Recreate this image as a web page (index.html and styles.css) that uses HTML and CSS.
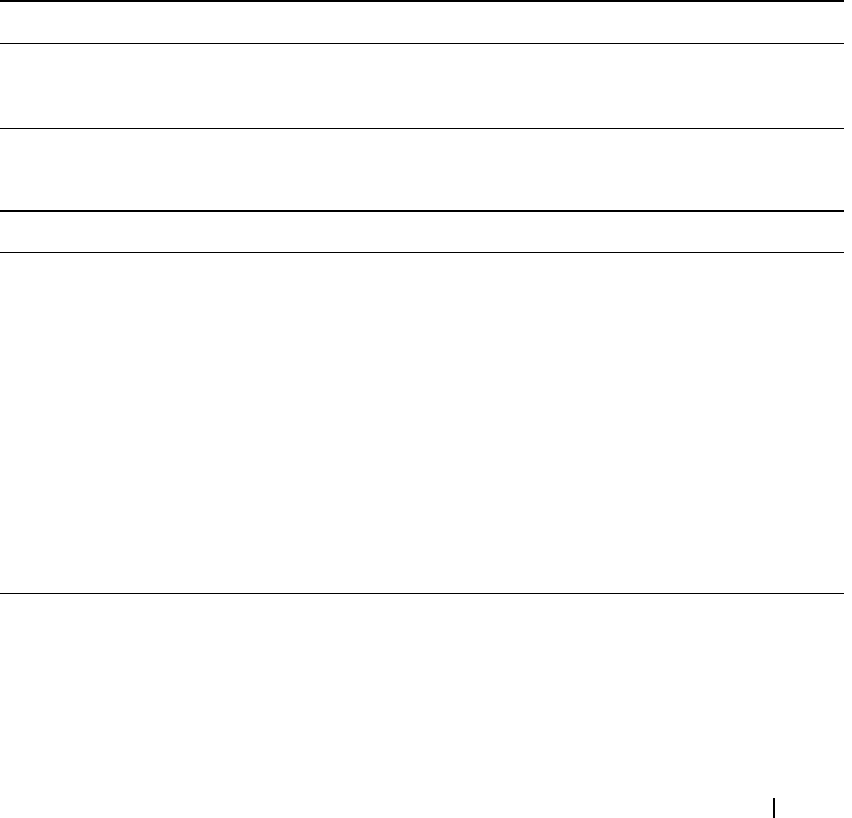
FILE: index.html
```html
<!DOCTYPE html>
<html lang="en">
<head>
    <meta charset="UTF-8">
    <title>Page</title>
    <meta name="viewport" content="width=device-width, initial-scale=1.0">
    <link rel="stylesheet" href="styles.css">
</head>
<body>
    <div class="page">
        <!-- first table -->
        <div class="table">
            <div class="row row-head"></div>
            <div class="row row-tall"></div>
            <div class="row row-last"></div>
        </div>
        <!-- second table -->
        <div class="table">
            <div class="row row-head2"></div>
            <div class="row row-body"></div>
        </div>
        <div class="footer">
            <span class="page-mark"></span>
        </div>
    </div>
</body>
</html>
```

FILE: styles.css
```css
:root {
    --ink: #000000;
    --paper: #FFFFFF;
}

body {
    margin: 0;
    background: var(--paper);
    font-family: 'Liberation Serif', serif;
    color: var(--ink);
}

.page {
    width: 844px;
}

.table {
    border-top: 2px solid var(--ink);
}

.row {
    border-bottom: 1px solid var(--ink);
}

.row-head {
    height: 41px;
}

.row-tall {
    height: 84px;
}

.row-last {
    height: 81px;
    border-bottom: none;
}

.row-head2 {
    height: 40px;
}

.row-body {
    height: 340px;
}

.footer {
    display: flex;
    padding: 204px 0 0 773px;
}

.page-mark {
    width: 2px;
    height: 20px;
    background: var(--ink);
}
```
